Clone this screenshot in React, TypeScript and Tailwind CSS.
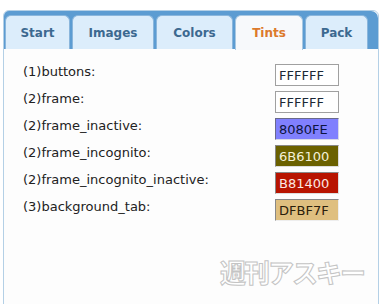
import React from 'react'

const tabs = [
  { name: 'Start', w: 'w-[65px]' },
  { name: 'Images', w: 'w-[82px]' },
  { name: 'Colors', w: 'w-[77px]' },
  { name: 'Tints', w: 'w-[68px]', active: true },
  { name: 'Pack', w: 'w-[63px]' },
]

const rows = [
  { label: '(1)buttons:', value: 'FFFFFF', box: 'bg-white border-[#a0a0a0] text-[#1c2836]' },
  { label: '(2)frame:', value: 'FFFFFF', box: 'bg-white border-[#a0a0a0] text-[#1c2836]' },
  { label: '(2)frame_inactive:', value: '8080FE', box: 'bg-[#8080fe] border-t-[#6a6a8a] border-l-[#6a6a8a] border-r-[#d8d8e8] border-b-[#d8d8e8] text-[#0c1440]' },
  { label: '(2)frame_incognito:', value: '6B6100', box: 'bg-[#6b6100] border-t-[#888] border-l-[#888] border-r-[#ddd] border-b-[#ddd] text-[#f4f0d8]' },
  { label: '(2)frame_incognito_inactive:', value: 'B81400', box: 'bg-[#b81400] border-t-[#888] border-l-[#888] border-r-[#ddd] border-b-[#ddd] text-[#fbe8e4]' },
  { label: '(3)background_tab:', value: 'DFBF7F', box: 'bg-[#dfbf7f] border-t-[#888] border-l-[#888] border-r-[#eee] border-b-[#eee] text-[#2a200c]' },
]

const App = () => {
  return (
    <div className="w-[384px] h-[304px] bg-white overflow-hidden pt-[10px] pl-[3px] pr-[5px] font-['DejaVu_Sans',sans-serif]">
      <div className="relative h-[320px] border border-[#b4d0e6] rounded-[6px] bg-[#fdfdfd]">
        <div className="h-[38px] bg-[#5c9cd2] rounded-t-[5px] rounded-tr-[7px] pt-[4px] pl-[1px] pr-[9px] flex items-end gap-[2px]">
          {tabs.map((t) => (
            <div
              key={t.name}
              className={`${t.w} h-[34px] rounded-t-[6px] border border-b-0 flex items-center justify-center text-[12px] font-bold ${
                t.active
                  ? 'bg-[#f7f9fb] border-[#a8c8e2] text-[#dc7a2c] h-[35px] -mb-[1px]'
                  : 'bg-[#dcedfb] border-[#8ab6dc] text-[#3c6990]'
              }`}
            >
              {t.name}
            </div>
          ))}
        </div>

        <div className="pt-[15px] pl-[19px] flex flex-col gap-[5px]">
          {rows.map((r) => (
            <div key={r.label} className="flex items-start h-[22px]">
              <div className="w-[252px] pt-[1px] text-[13px] text-[#222] leading-[14px]">{r.label}</div>
              <div className={`w-[64px] h-[22px] border ${r.box} text-[13px] leading-none flex items-center pl-[3px]`}>
                {r.value}
              </div>
            </div>
          ))}
        </div>

        <div className="absolute right-[14px] top-[241px] text-[26px] font-bold tracking-[-2px] text-white [-webkit-text-stroke:1px_#c4c4c4] font-['Noto_Sans_CJK_JP',sans-serif]">
          週刊アスキー
        </div>
      </div>
    </div>
  )
}

export default App
